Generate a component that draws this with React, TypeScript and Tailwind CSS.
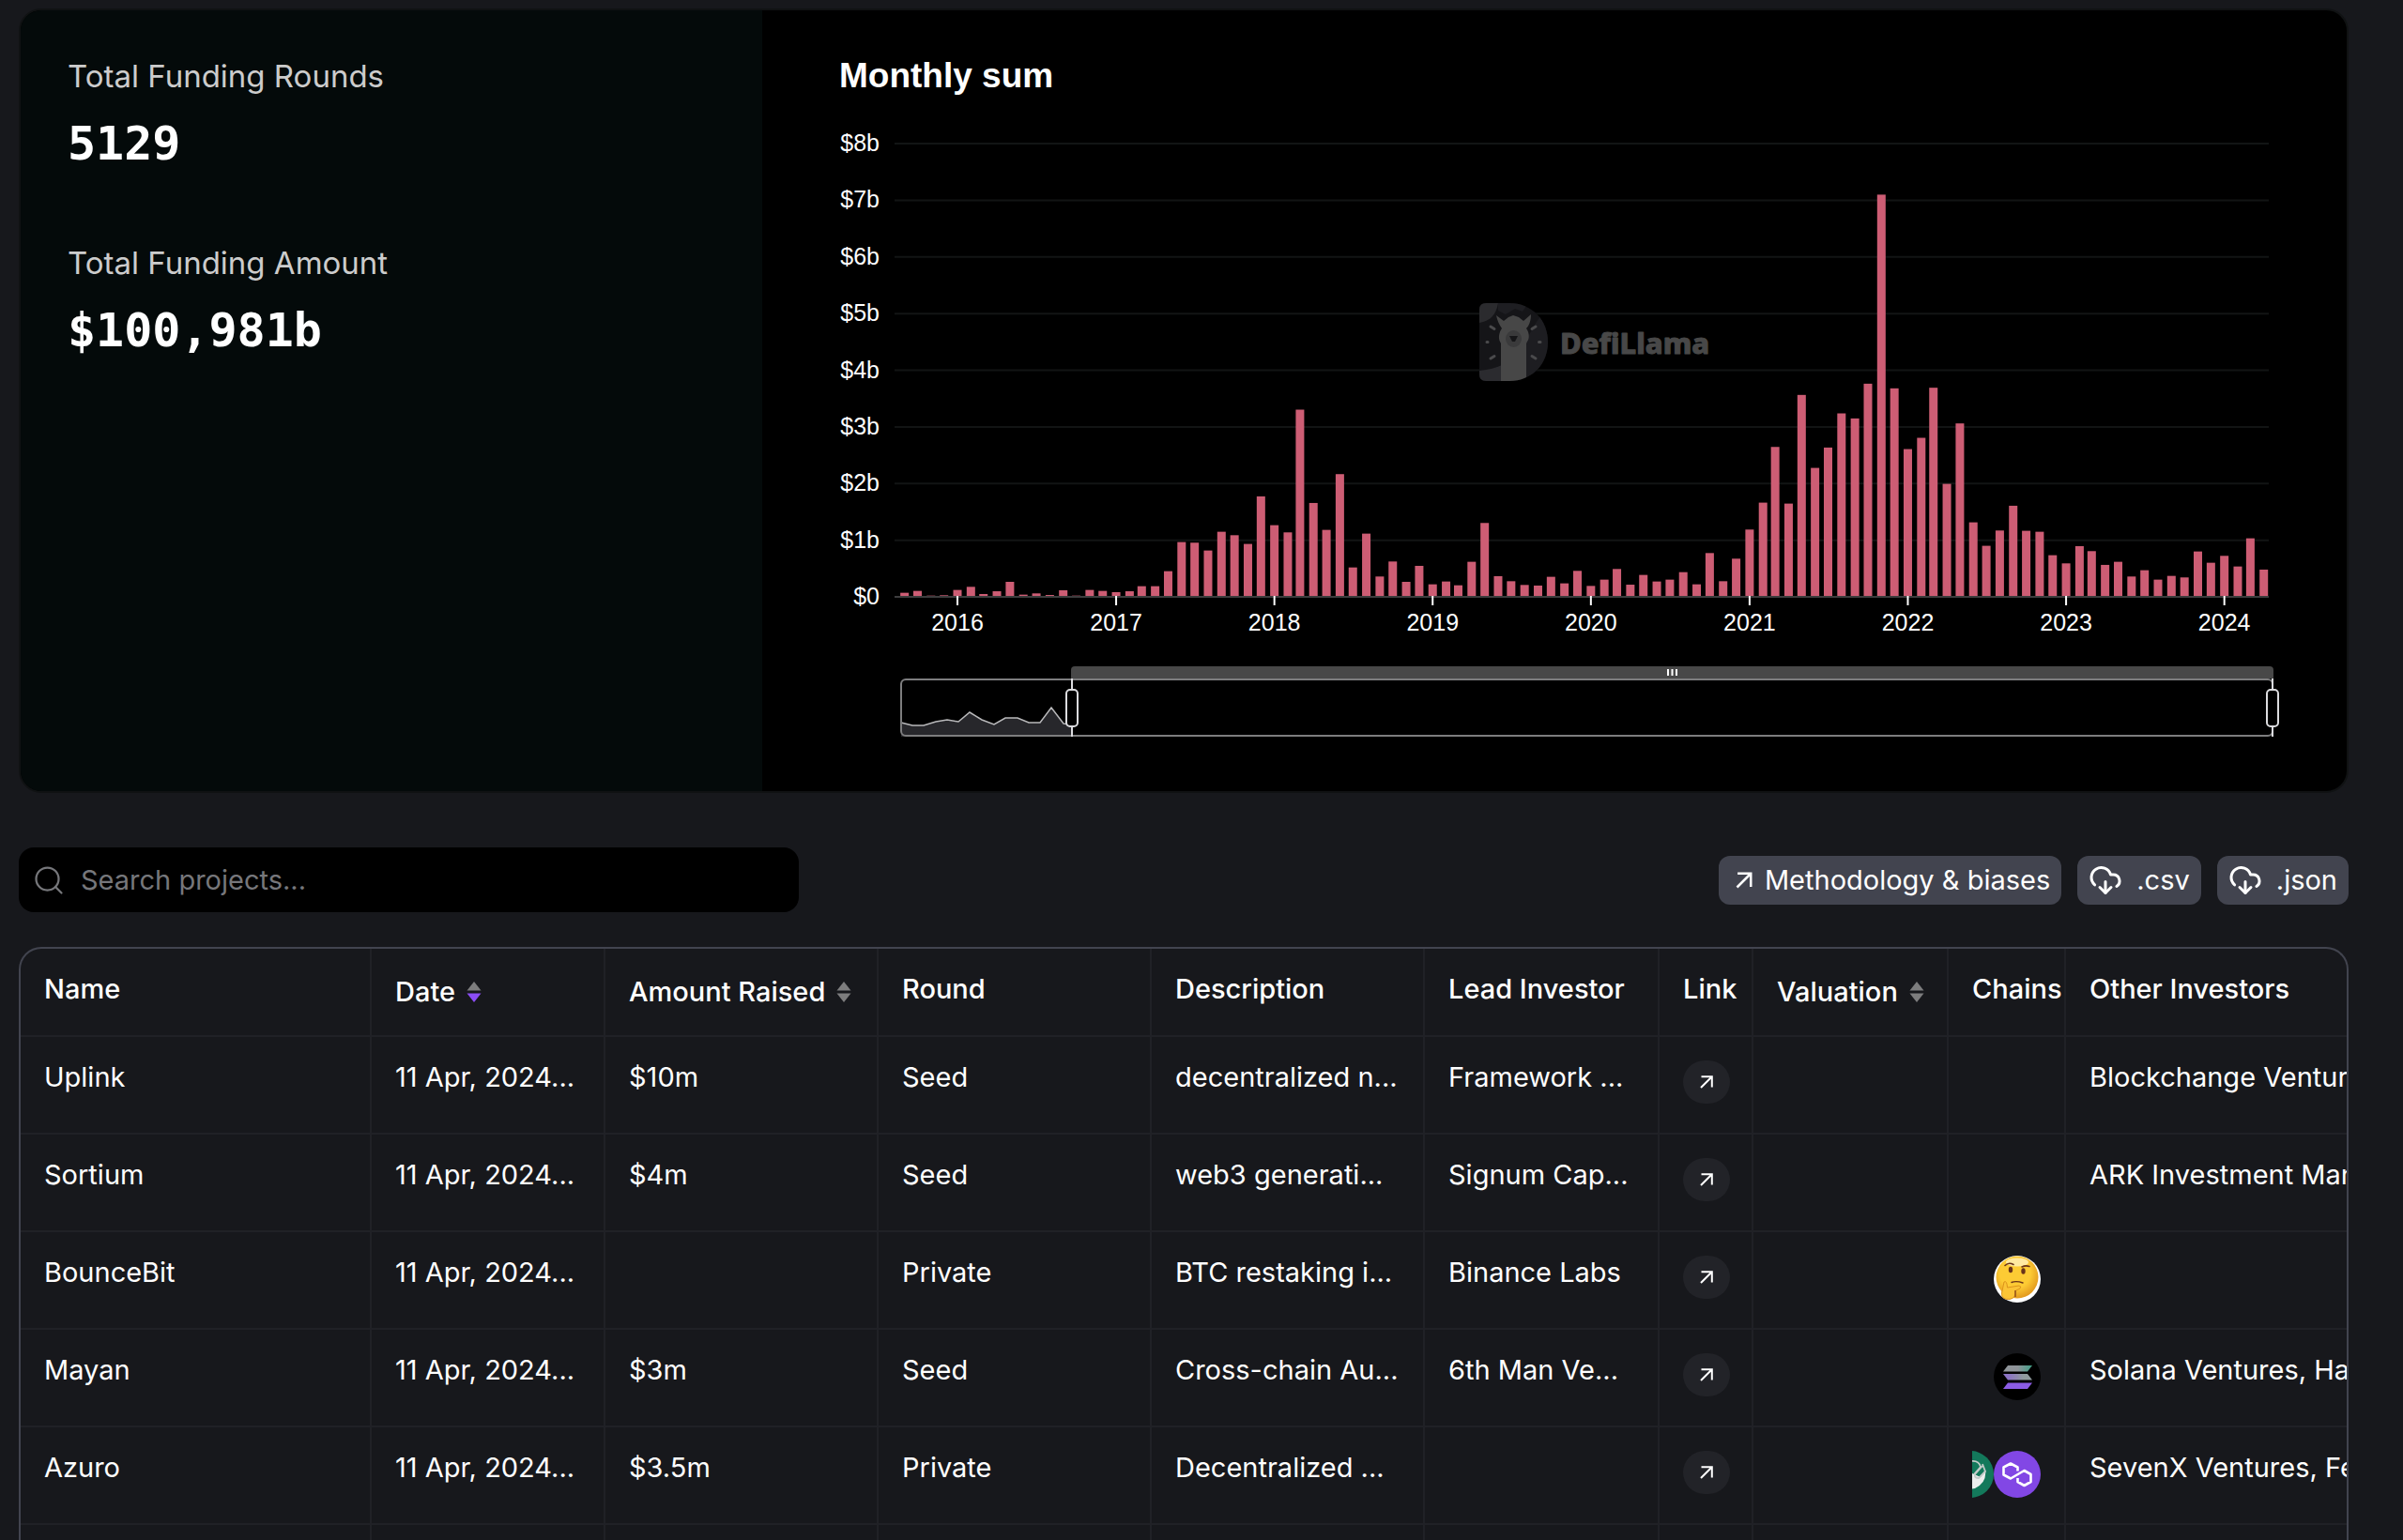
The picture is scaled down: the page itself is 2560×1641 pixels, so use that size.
import { LuCloudDownload, LuSearch } from 'react-icons/lu'

type SortState = 'none' | 'desc'
type Chain = 'unknown' | 'solana' | 'polygon' | 'gnosis'

interface Raise {
  name: string
  date: string
  amount?: string
  round: string
  description: string
  lead?: string
  chains?: Chain[]
  others?: string
}

const RAISES: Raise[] = [
  { name: 'Uplink', date: '11 Apr, 2024...', amount: '$10m', round: 'Seed', description: 'decentralized n...', lead: 'Framework ...', others: 'Blockchange Ventures' },
  { name: 'Sortium', date: '11 Apr, 2024...', amount: '$4m', round: 'Seed', description: 'web3 generati...', lead: 'Signum Cap...', others: 'ARK Investment Management' },
  { name: 'BounceBit', date: '11 Apr, 2024...', round: 'Private', description: 'BTC restaking i...', lead: 'Binance Labs', chains: ['unknown'] },
  { name: 'Mayan', date: '11 Apr, 2024...', amount: '$3m', round: 'Seed', description: 'Cross-chain Au...', lead: '6th Man Ve...', chains: ['solana'], others: 'Solana Ventures, Hashed' },
  { name: 'Azuro', date: '11 Apr, 2024...', amount: '$3.5m', round: 'Private', description: 'Decentralized ...', chains: ['gnosis', 'polygon'], others: 'SevenX Ventures, Fenbushi' },
]

// Monthly totals in millions of dollars, September 2015 onwards
const MONTHLY = [
  72, 105, 22, 28,
  122, 177, 50, 99, 265, 39, 61, 33, 116, 22, 122, 105,
  83, 99, 188, 188, 453, 967, 956, 818, 1149, 1088, 934, 1773,
  1265, 1138, 3304, 1657, 1182, 2166, 519, 1116, 359, 624, 265, 547,
  221, 271, 204, 619, 1304, 365, 276, 210, 199, 354, 238, 459,
  193, 304, 492, 215, 387, 271, 304, 436, 221, 773, 276, 674,
  1188, 1663, 2646, 1646, 3564, 2276, 2635, 3238, 3149, 3762, 7099, 3680,
  2608, 2807, 3691, 1994, 3061, 1315, 901, 1171, 1608, 1166, 1149, 735,
  591, 895, 807, 564, 619, 359, 470, 304, 370, 343, 801, 602,
  724, 536, 1033, 481,
]

const YEARS = [2016, 2017, 2018, 2019, 2020, 2021, 2022, 2023, 2024]
const BASELINE = 532
const BILLION = 60.375
const DAY_MS = 86400000

function dateToX(year: number, month: number) {
  const days = (Date.UTC(year, month, 1) - Date.UTC(2016, 0, 1)) / DAY_MS
  return 208 + days * 0.4619
}

function Watermark() {
  return (
    <g>
      <svg x="764" y="219" width="73" height="83" viewBox="0 0 73 83">
        <defs>
          <clipPath id="logo-shape">
            <path d="M7 0H32C56 0 73 18 73 41.5S56 83 32 83H7Q0 83 0 76V7Q0 0 7 0Z" />
          </clipPath>
        </defs>
        <g clipPath="url(#logo-shape)">
          <rect width="73" height="83" fill="#151518" />
          <path d="M0 0H20C18 12 12 19 0 21Z" fill="#2b2b2e" />
          <path d="M20 0H52L46 9L38 6L28 12L20 8Z" fill="#1e1e22" />
          <path d="M50 40C60 20 66 10 73 10V83H40L50 83Z" fill="#1d1d21" />
          <path d="M0 72C10 71 18 69 24 66V83H0Z" fill="#2b2b2f" />
          <path d="M18 13L26 19L31 15L36 13L42 15L47 19L55 12C55 19 53 24 50 27C53 31 54 37 51 41L50 43V83H23V43L22 41C20 37 21 31 24 27C21 23 19 18 18 13Z" fill="#474747" />
          <ellipse cx="36.500" cy="38" rx="8.500" ry="9" fill="#3a3a3b" />
          <path d="M32 35H41L38 41H35Z" fill="#161618" />
          <g stroke="#4a4a4c" strokeWidth="3" strokeLinecap="round">
            <path d="M12 25L16 27.500M8 41.500H9M12 59L16 56.500M60 25L56 27.500M63.500 41.500H65M60 59L56 56.500" />
          </g>
        </g>
      </svg>
      <text x="850" y="273" fontSize="31" fontWeight="800" fill="#484848" stroke="#484848" strokeWidth="1" strokeLinejoin="round" className="font-['Noto_Sans',sans-serif]">
        DefiLlama
      </text>
    </g>
  )
}

function RangeHandle({ x }: { x: number }) {
  return (
    <g stroke="#dcdcdf" strokeWidth="2">
      <path d={`M${x} 619V681`} />
      <rect x={x - 6} y="631" width="12" height="39" rx="4" fill="#000" />
    </g>
  )
}

function MonthlyChart() {
  return (
    <svg viewBox="0 0 1688 739" className="block w-full font-['Liberation_Sans',Arial,sans-serif]" role="img" aria-label="Monthly sum of funding">
      {[0, 1, 2, 3, 4, 5, 6, 7, 8].map((n) => (
        <g key={n}>
          {n > 0 && <path d={`M141 ${BASELINE - n * BILLION}H1605`} stroke="#121414" strokeWidth="2" />}
          <text x="125" y={BASELINE - n * BILLION + 8} fontSize="25" textAnchor="end" fill="#fff">
            {n === 0 ? '$0' : `$${n}b`}
          </text>
        </g>
      ))}

      <Watermark />

      {MONTHLY.map((value, i) => {
        const x = dateToX(2015, 8 + i)
        const height = (value / 1000) * BILLION
        return <rect key={i} x={x - 4.5} y={BASELINE - height} width="9" height={height} fill="#cd5d74" />
      })}

      <path d="M141 532H1605" stroke="#3d3d3e" strokeWidth="2" />
      {YEARS.map((year) => (
        <g key={year}>
          <path d={`M${dateToX(year, 0)} 531V541`} stroke="#fff" strokeWidth="2" />
          <text x={dateToX(year, 0)} y="568" fontSize="25" textAnchor="middle" fill="#fff">
            {year}
          </text>
        </g>
      ))}

      <path
        d="M148 681V666L160 669H172L185 665L197 663L209 665L221 655L234 663L247 668L259 661H272L284 666H296L308 650L321 667L330 668V681Z"
        fill="#27272b"
      />
      <path
        d="M148 666L160 669H172L185 665L197 663L209 665L221 655L234 663L247 668L259 661H272L284 666H296L308 650L321 667L330 668"
        fill="none"
        stroke="#b9b9bb"
        strokeWidth="1.5"
      />
      <path d="M329 619V610Q329 606 333 606H1606Q1610 606 1610 610V619Z" fill="#484848" />
      <rect x="148" y="620" width="1461" height="60" rx="5" fill="none" stroke="#7d7d7e" strokeWidth="2" />
      <path d="M965 609V616M969.500 609V616M974 609V616" stroke="#fff" strokeWidth="2" />
      <RangeHandle x={330} />
      <RangeHandle x={1609} />
    </svg>
  )
}

function ArrowUpRight({ className }: { className: string }) {
  return (
    <svg viewBox="0 0 16 16" className={className} fill="none" stroke="currentColor" strokeWidth="2" aria-hidden="true">
      <path d="M2.500 2.200H13.800V13.500M13.800 2.200L2 14" />
    </svg>
  )
}

function SortIcon({ state }: { state: SortState }) {
  return (
    <svg viewBox="0 0 16 22" className="h-[22px] w-4" aria-hidden="true">
      <path d="M8 0L15.500 9.500H0.500Z" fill="#7d7d7e" />
      <path d="M8 22L15.500 12.500H0.500Z" fill={state === 'desc' ? '#8b4df5' : '#7d7d7e'} />
    </svg>
  )
}

function ChainIcon({ chain }: { chain: Chain }) {
  if (chain === 'unknown') {
    return (
      <svg viewBox="0 0 50 50" className="size-[50px] shrink-0" role="img" aria-label="Unknown">
        <defs>
          <radialGradient id="face" cx="0.45" cy="0.4" r="0.6">
            <stop offset="0.6" stopColor="#fdcb34" />
            <stop offset="1" stopColor="#e39a1e" />
          </radialGradient>
        </defs>
        <circle cx="25" cy="25" r="25" fill="#fff" />
        <ellipse cx="25" cy="23" rx="22.500" ry="22.500" fill="url(#face)" />
        <ellipse cx="25" cy="7" rx="12" ry="4.500" fill="#ffe9a0" />
        <ellipse cx="18" cy="15" rx="2.200" ry="3.200" fill="#69331a" />
        <ellipse cx="31.500" cy="16.500" rx="2.200" ry="3.200" fill="#69331a" />
        <path d="M12 10.500Q16 6.500 21 9.500M30 12Q34 10 38 11.500" fill="none" stroke="#69331a" strokeWidth="1.600" strokeLinecap="round" />
        <path d="M19 28.500Q24 26.500 31 29" fill="none" stroke="#69331a" strokeWidth="1.400" strokeLinecap="round" />
        <path d="M11 28Q14 26 14.500 34L27 32Q30 32.500 28 35L23 37.500Q24 45 17 46.500Q8 47 8.500 40Z" fill="#fbc436" stroke="#dd951b" strokeWidth="1" />
        <path d="M23 37V44" stroke="#8a4a1c" strokeWidth="1.400" />
      </svg>
    )
  }
  if (chain === 'solana') {
    return (
      <svg viewBox="0 0 50 50" className="size-[50px] shrink-0" role="img" aria-label="Solana">
        <defs>
          <linearGradient id="sol-top" x1="0" x2="1">
            <stop offset="0.5" stopColor="#8f9499" />
            <stop offset="1" stopColor="#3f9f86" />
          </linearGradient>
          <linearGradient id="sol-mid" x1="0" x2="1">
            <stop offset="0.2" stopColor="#8c74c4" />
            <stop offset="0.7" stopColor="#8f9a9c" />
          </linearGradient>
        </defs>
        <circle cx="25" cy="25" r="25" fill="#000" />
        <path d="M15 13H41L36 19.500H10Z" fill="url(#sol-top)" />
        <path d="M10 22H36L41 28.500H15Z" fill="url(#sol-mid)" />
        <path d="M15 31.500H41L36 38H10Z" fill="#8b5ce4" />
      </svg>
    )
  }
  if (chain === 'polygon') {
    return (
      <svg viewBox="0 0 50 50" className="size-[50px] shrink-0" role="img" aria-label="Polygon">
        <circle cx="25" cy="25" r="25" fill="#8247e5" />
        <path
          d="M25.500 21.500V17.500L18 13.500L10.500 17.500V25.500L18 29.500L32.500 21L39.500 25V33L32.500 37L25.500 33V29"
          fill="none"
          stroke="#fff"
          strokeWidth="2.600"
          strokeLinejoin="round"
        />
      </svg>
    )
  }
  return (
    <svg viewBox="0 0 50 50" className="size-[50px] shrink-0" role="img" aria-label="Gnosis">
      <circle cx="25" cy="25" r="25" fill="#13795b" />
      <path d="M25 23L36 28L41 20Q43 34 30 40L20 42V22Z" fill="#eceeed" />
      <path d="M26 11Q34 10 36 17L29 25M38 14L41 22L34 29Q29 29 30 25L38 16" fill="none" stroke="#c3cbc8" strokeWidth="1.800" />
    </svg>
  )
}

function HeaderCell({ label, sort }: { label: string; sort?: SortState }) {
  return (
    <th scope="col" className="h-[94px] border-r-2 border-b-2 border-[#202126] px-[25px] pt-[25px] text-left align-top font-medium whitespace-nowrap last:border-r-0">
      {sort ? (
        <button type="button" className="flex items-center gap-3 pt-[3px]">
          {label}
          <SortIcon state={sort} />
        </button>
      ) : (
        label
      )}
    </th>
  )
}

const CELL = 'h-[104px] overflow-hidden border-r-2 border-b-2 border-[#202126] px-[25px] pt-[25px] align-top whitespace-nowrap last:border-r-0'
const ICON_CELL = 'h-[104px] border-r-2 border-b-2 border-[#202126] px-[25px] pt-[25px] align-top'

function RaiseRow({ raise }: { raise: Raise }) {
  return (
    <tr>
      <td className={CELL}>{raise.name}</td>
      <td className={CELL}>{raise.date}</td>
      <td className={CELL}>{raise.amount}</td>
      <td className={CELL}>{raise.round}</td>
      <td className={CELL}>{raise.description}</td>
      <td className={CELL}>{raise.lead}</td>
      <td className={ICON_CELL}>
        <a href="#source" aria-label={`Source for ${raise.name}`} className="flex h-[46px] w-[50px] items-center justify-center rounded-full bg-[#222328]">
          <ArrowUpRight className="size-4" />
        </a>
      </td>
      <td className={CELL} />
      <td className={ICON_CELL}>
        <div className="flex justify-end overflow-hidden">
          {raise.chains?.map((chain) => <ChainIcon key={chain} chain={chain} />)}
        </div>
      </td>
      <td className={CELL}>{raise.others}</td>
    </tr>
  )
}

function Stat({ label, value }: { label: string; value: string }) {
  return (
    <div className="flex flex-col gap-[22px]">
      <p className="text-[33px] leading-[42px] text-[#cccccc]">{label}</p>
      <p className="font-['DejaVu_Sans_Mono',monospace] text-[50px] leading-[58px] font-bold">{value}</p>
    </div>
  )
}

const TOOL_BUTTON = 'flex h-[52px] items-center rounded-xl bg-[#42444f] px-3'

export default function App() {
  return (
    <div className="flex h-screen flex-col overflow-hidden bg-[#17181c] pt-[9px] pr-[58px] pl-5 font-[Inter,sans-serif] text-[29px] leading-9 text-white">
      <section className="flex shrink-0 overflow-hidden rounded-3xl border-2 border-[#101213] bg-black">
        <div className="flex w-[790px] shrink-0 flex-col gap-[77px] bg-[#040a0a] px-[50px] pt-[49px]">
          <Stat label="Total Funding Rounds" value="5129" />
          <Stat label="Total Funding Amount" value="$100,981b" />
        </div>
        <div className="min-w-0 flex-1">
          <h2 className="px-[82px] pt-[47px] font-['Liberation_Sans',Arial,sans-serif] text-[37px] leading-[46px] font-bold">
            Monthly sum
          </h2>
          <MonthlyChart />
        </div>
      </section>

      <div className="mt-[58px] flex shrink-0 items-center justify-between">
        <label className="flex h-[69px] w-[831px] items-center gap-4 rounded-2xl bg-black px-[14px]">
          <LuSearch className="size-9 text-[#76777b]" strokeWidth={1.5} aria-hidden="true" />
          <input
            type="search"
            aria-label="Search projects"
            placeholder="Search projects..."
            className="min-w-0 flex-1 bg-transparent outline-none placeholder:text-[#76777b]"
          />
        </label>
        <div className="flex gap-[17px]">
          <a href="#methodology" className={TOOL_BUTTON}>
            <ArrowUpRight className="mr-3 ml-[5px] size-5" />
            Methodology &amp; biases
          </a>
          <button type="button" className={TOOL_BUTTON}>
            <LuCloudDownload className="mr-[15px] size-9" aria-hidden="true" />
            .csv
          </button>
          <button type="button" className={TOOL_BUTTON}>
            <LuCloudDownload className="mr-[15px] size-9" aria-hidden="true" />
            .json
          </button>
        </div>
      </div>

      <div className="mt-[37px] min-h-0 flex-1 overflow-hidden rounded-t-3xl border-2 border-b-0 border-[#42444f]">
        <table className="w-full table-fixed border-separate border-spacing-0">
          <colgroup>
            <col className="w-[374px]" />
            <col className="w-[249px]" />
            <col className="w-[291px]" />
            <col className="w-[291px]" />
            <col className="w-[291px]" />
            <col className="w-[250px]" />
            <col className="w-[100px]" />
            <col className="w-[208px]" />
            <col className="w-[125px]" />
            <col />
          </colgroup>
          <thead>
            <tr>
              <HeaderCell label="Name" />
              <HeaderCell label="Date" sort="desc" />
              <HeaderCell label="Amount Raised" sort="none" />
              <HeaderCell label="Round" />
              <HeaderCell label="Description" />
              <HeaderCell label="Lead Investor" />
              <HeaderCell label="Link" />
              <HeaderCell label="Valuation" sort="none" />
              <HeaderCell label="Chains" />
              <HeaderCell label="Other Investors" />
            </tr>
          </thead>
          <tbody>
            {RAISES.map((raise) => (
              <RaiseRow key={raise.name} raise={raise} />
            ))}
            <tr>
              {Array.from({ length: 10 }, (_, i) => (
                <td key={i} className={CELL} />
              ))}
            </tr>
          </tbody>
        </table>
      </div>
    </div>
  )
}
